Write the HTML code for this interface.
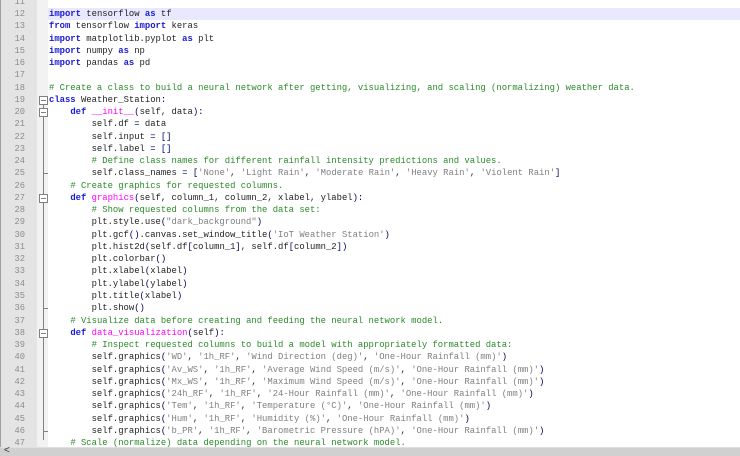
<!DOCTYPE html>
<html><head><meta charset="utf-8"><style>
html,body{margin:0;padding:0;width:740px;height:456px;overflow:hidden;background:#fff}
.g{position:absolute;left:0;top:0;width:37px;height:447px;background:#e4e4e4;border-left:1px solid #a0a0a0;box-sizing:border-box}
.f{position:absolute;left:37px;top:0;width:11px;height:447px;background:#f2f2f2}
.l{position:absolute;left:0;height:12.26px;line-height:12.26px;font-family:"Liberation Mono",monospace;font-size:8.9px;white-space:pre;color:#222}
.n{position:absolute;width:25px;text-align:right;color:#8c8c8c;font-family:"Liberation Mono",monospace;font-size:8.75px;line-height:12.26px;height:12.26px;left:0}
.c{position:absolute;left:49px}
.k{color:#1a1ad0;font-weight:bold}
.cm{color:#2a8a2a}
.s{color:#808080}
.d{color:#ff00ff}
.o{color:#000060}
.cur{position:absolute;left:48px;width:692px;height:12.26px;background:#e8e8ff}
.box{position:absolute;left:39px;width:9px;height:9px;border:1px solid #808080;background:#fff;box-sizing:border-box}
.box:after{content:"";position:absolute;left:1px;top:3px;width:5px;height:1px;background:#808080}
.sb{position:absolute;left:0;top:447px;width:740px;height:9px;background:#d0d0d0;border-top:1px solid #e0e0e0;box-sizing:border-box}
</style></head><body>
<div class="g"></div><div class="f"></div>
<div class="cur" style="top:8px"></div>
<div style="position:absolute;left:43px;top:104px;width:1px;height:336px;background:#808080"></div>
<div id="c"></div>
<div class="sb"><span style="position:absolute;left:4px;top:-3px;font-size:10px;font-family:'Liberation Sans',sans-serif;color:#333">&lt;</span></div>
<script>
var L=[
[11,''],
[12,'<span class="k">import</span> tensorflow <span class="k">as</span> tf'],
[13,'<span class="k">from</span> tensorflow <span class="k">import</span> keras'],
[14,'<span class="k">import</span> matplotlib.pyplot <span class="k">as</span> plt'],
[15,'<span class="k">import</span> numpy <span class="k">as</span> np'],
[16,'<span class="k">import</span> pandas <span class="k">as</span> pd'],
[17,''],
[18,'<span class="cm"># Create a class to build a neural network after getting, visualizing, and scaling (normalizing) weather data.</span>'],
[19,'<span class="k">class</span> Weather_Station<span class="o">:</span>'],
[20,'    <span class="k">def</span> <span class="d">__init__</span><span class="o">(</span>self, data<span class="o">):</span>'],
[21,'        self.df <span class="o">=</span> data'],
[22,'        self.input <span class="o">=</span> <span class="o">[]</span>'],
[23,'        self.label <span class="o">=</span> <span class="o">[]</span>'],
[24,'        <span class="cm"># Define class names for different rainfall intensity predictions and values.</span>'],
[25,'        self.class_names <span class="o">=</span> <span class="o">[</span><span class="s">\'None\'</span>, <span class="s">\'Light Rain\'</span>, <span class="s">\'Moderate Rain\'</span>, <span class="s">\'Heavy Rain\'</span>, <span class="s">\'Violent Rain\'</span><span class="o">]</span>'],
[26,'    <span class="cm"># Create graphics for requested columns.</span>'],
[27,'    <span class="k">def</span> <span class="d">graphics</span><span class="o">(</span>self, column_1, column_2, xlabel, ylabel<span class="o">):</span>'],
[28,'        <span class="cm"># Show requested columns from the data set:</span>'],
[29,'        plt.style.use<span class="o">(</span><span class="s">"dark_background"</span><span class="o">)</span>'],
[30,'        plt.gcf<span class="o">()</span>.canvas.set_window_title<span class="o">(</span><span class="s">\'IoT Weather Station\'</span><span class="o">)</span>'],
[31,'        plt.hist2d<span class="o">(</span>self.df<span class="o">[</span>column_1<span class="o">]</span>, self.df<span class="o">[</span>column_2<span class="o">])</span>'],
[32,'        plt.colorbar<span class="o">()</span>'],
[33,'        plt.xlabel<span class="o">(</span>xlabel<span class="o">)</span>'],
[34,'        plt.ylabel<span class="o">(</span>ylabel<span class="o">)</span>'],
[35,'        plt.title<span class="o">(</span>xlabel<span class="o">)</span>'],
[36,'        plt.show<span class="o">()</span>'],
[37,'    <span class="cm"># Visualize data before creating and feeding the neural network model.</span>'],
[38,'    <span class="k">def</span> <span class="d">data_visualization</span><span class="o">(</span>self<span class="o">):</span>'],
[39,'        <span class="cm"># Inspect requested columns to build a model with appropriately formatted data:</span>'],
[40,'        self.graphics<span class="o">(</span><span class="s">\'WD\'</span>, <span class="s">\'1h_RF\'</span>, <span class="s">\'Wind Direction (deg)\'</span>, <span class="s">\'One-Hour Rainfall (mm)\'</span><span class="o">)</span>'],
[41,'        self.graphics<span class="o">(</span><span class="s">\'Av_WS\'</span>, <span class="s">\'1h_RF\'</span>, <span class="s">\'Average Wind Speed (m/s)\'</span>, <span class="s">\'One-Hour Rainfall (mm)\'</span><span class="o">)</span>'],
[42,'        self.graphics<span class="o">(</span><span class="s">\'Mx_WS\'</span>, <span class="s">\'1h_RF\'</span>, <span class="s">\'Maximum Wind Speed (m/s)\'</span>, <span class="s">\'One-Hour Rainfall (mm)\'</span><span class="o">)</span>'],
[43,'        self.graphics<span class="o">(</span><span class="s">\'24h_RF\'</span>, <span class="s">\'1h_RF\'</span>, <span class="s">\'24-Hour Rainfall (mm)\'</span>, <span class="s">\'One-Hour Rainfall (mm)\'</span><span class="o">)</span>'],
[44,'        self.graphics<span class="o">(</span><span class="s">\'Tem\'</span>, <span class="s">\'1h_RF\'</span>, <span class="s">\'Temperature (°C)\'</span>, <span class="s">\'One-Hour Rainfall (mm)\'</span><span class="o">)</span>'],
[45,'        self.graphics<span class="o">(</span><span class="s">\'Hum\'</span>, <span class="s">\'1h_RF\'</span>, <span class="s">\'Humidity (%)\'</span>, <span class="s">\'One-Hour Rainfall (mm)\'</span><span class="o">)</span>'],
[46,'        self.graphics<span class="o">(</span><span class="s">\'b_PR\'</span>, <span class="s">\'1h_RF\'</span>, <span class="s">\'Barometric Pressure (hPA)\'</span>, <span class="s">\'One-Hour Rainfall (mm)\'</span><span class="o">)</span>'],
[47,'    <span class="cm"># Scale (normalize) data depending on the neural network model.</span>']
];
var h='';
L.forEach(function(a){var t=8+(a[0]-12)*12.26;
h+='<div class="l" style="top:'+t+'px;width:740px"><span class="n">'+a[0]+'</span><span class="c">'+a[1]+'</span></div>';
if([19,20,27,38].indexOf(a[0])>=0)h+='<div class="box" style="top:'+(t+2)+'px"></div>';
if([25,36,46].indexOf(a[0])>=0)h+='<div style="position:absolute;left:43px;top:'+(t+6)+'px;width:5px;height:1px;background:#808080"></div>';
});
document.getElementById('c').innerHTML=h;
</script>
</body></html>
